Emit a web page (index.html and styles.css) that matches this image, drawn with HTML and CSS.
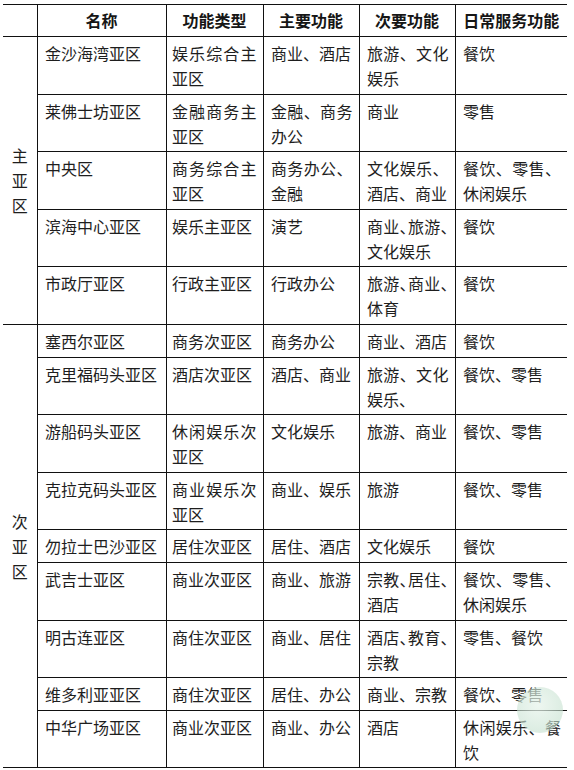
FILE: index.html
```html
<!DOCTYPE html>
<html lang="zh-CN">
<head>
<meta charset="utf-8">
<title>亚区功能表</title>
<link rel="stylesheet" href="styles.css">
</head>
<body>
<div class="page">
<table class="zones">
  <colgroup>
    <col class="c-group"><col class="c-name"><col class="c-type"><col class="c-main"><col class="c-sub"><col class="c-daily">
  </colgroup>
  <thead>
    <tr>
      <th></th><th>名称</th><th>功能类型</th><th>主要功能</th><th>次要功能</th><th>日常服务功能</th>
    </tr>
  </thead>
  <tbody>
    <tr>
      <td class="group" rowspan="5">主亚区</td>
      <td>金沙海湾亚区</td><td class="type">娱乐综合主亚区</td><td>商业、酒店</td><td>旅游、文化娱乐</td><td>餐饮</td>
    </tr>
    <tr><td>莱佛士坊亚区</td><td class="type">金融商务主亚区</td><td>金融、商务办公</td><td>商业</td><td>零售</td></tr>
    <tr><td>中央区</td><td class="type">商务综合主亚区</td><td>商务办公、金融</td><td>文化娱乐、酒店、商业</td><td>餐饮、零售、休闲娱乐</td></tr>
    <tr><td>滨海中心亚区</td><td class="type">娱乐主亚区</td><td>演艺</td><td>商业<span class="h">、</span>旅游<span class="h">、</span>文化娱乐</td><td>餐饮</td></tr>
    <tr><td>市政厅亚区</td><td class="type">行政主亚区</td><td>行政办公</td><td>旅游<span class="h">、</span>商业<span class="h">、</span>体育</td><td>餐饮</td></tr>
    <tr>
      <td class="group" rowspan="9">次亚区</td>
      <td>塞西尔亚区</td><td class="type">商务次亚区</td><td>商务办公</td><td>商业、酒店</td><td>餐饮</td>
    </tr>
    <tr><td>克里福码头亚区</td><td class="type">酒店次亚区</td><td>酒店、商业</td><td>旅游、文化娱乐、</td><td>餐饮、零售</td></tr>
    <tr><td>游船码头亚区</td><td class="type">休闲娱乐次亚区</td><td>文化娱乐</td><td>旅游、商业</td><td>餐饮、零售</td></tr>
    <tr><td>克拉克码头亚区</td><td class="type">商业娱乐次亚区</td><td>商业、娱乐</td><td>旅游</td><td>餐饮、零售</td></tr>
    <tr><td>勿拉士巴沙亚区</td><td class="type">居住次亚区</td><td>居住、酒店</td><td>文化娱乐</td><td>餐饮</td></tr>
    <tr><td>武吉士亚区</td><td class="type">商业次亚区</td><td>商业、旅游</td><td>宗教<span class="h">、</span>居住<span class="h">、</span>酒店</td><td>餐饮、零售、休闲娱乐</td></tr>
    <tr><td>明古连亚区</td><td class="type">商住次亚区</td><td>商业、居住</td><td>酒店<span class="h">、</span>教育<span class="h">、</span>宗教</td><td>零售、餐饮</td></tr>
    <tr><td>维多利亚亚区</td><td class="type">商住次亚区</td><td>居住、办公</td><td>商业、宗教</td><td>餐饮、零售</td></tr>
    <tr><td>中华广场亚区</td><td class="type">商业次亚区</td><td>商业、办公</td><td>酒店</td><td>休闲娱乐、餐饮</td></tr>
  </tbody>
</table>
<div class="stamp" aria-hidden="true"></div>
</div>
</body>
</html>
```

FILE: styles.css
```css
html, body {
  margin: 0;
  padding: 0;
  background: #ffffff;
}

.page {
  position: relative;
  width: 574px;
  height: 770px;
  overflow: hidden;
  padding-top: 4px;
  box-sizing: border-box;
}

.zones {
  margin-left: 3px;
  width: 564px;
  table-layout: fixed;
  border-collapse: collapse;
  font-family: "Noto Sans CJK SC", "Noto Sans", sans-serif;
  font-size: 16px;
  line-height: 25px;
  color: #1e1e1e;
}

.c-group { width: 34px; }
.c-name { width: 129px; }
.c-type { width: 97px; }
.c-main { width: 96px; }
.c-sub { width: 96px; }
.c-daily { width: 112px; }

.zones th,
.zones td {
  border: 1px solid #111;
  padding: 4px 6px 2.6px 7.5px;
  vertical-align: top;
  text-align: justify;
  word-break: break-all;
}

.zones th {
  padding: 3px 4px 3px 4px;
  text-align: center;
  font-weight: 700;
  color: #161616;
}

.zones tr > :first-child { border-left: none; }
.zones tr > :last-child { border-right: none; }

.zones td.type {
  padding-left: 5.5px;
}

.zones td.group {
  padding: 0 8px;
  text-align: center;
  vertical-align: middle;
  border-left: none;
}

.h {
  letter-spacing: -8px;
}

.stamp {
  position: absolute;
  left: 517px;
  top: 687px;
  width: 46px;
  height: 46px;
  border-radius: 50%;
  background: radial-gradient(circle at 45% 40%, rgba(232, 244, 236, 0.75), rgba(196, 224, 206, 0.6) 70%, rgba(210, 226, 214, 0.35) 100%);
}
```
